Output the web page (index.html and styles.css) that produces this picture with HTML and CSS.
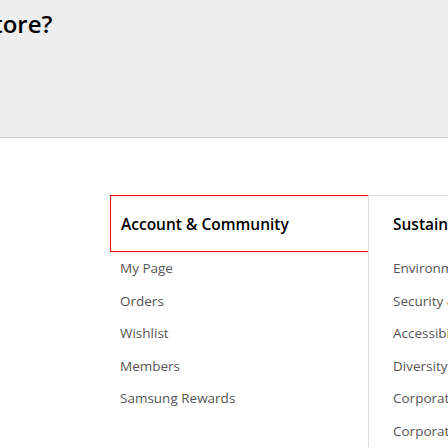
FILE: index.html
```html
<!DOCTYPE html>
<html>
<head>
<meta charset="utf-8">
<link rel="stylesheet" href="styles.css">
</head>
<body>
<div class="top">
  <h2 class="more">Store?</h2>
</div>
<div class="nav">
  <div class="spacer"></div>
  <div class="col col-active">
    <div class="head">Account &amp; Community</div>
    <ul class="links">
      <li>My Page</li>
      <li>Orders</li>
      <li>Wishlist</li>
      <li>Members</li>
      <li>Samsung Rewards</li>
    </ul>
  </div>
  <div class="col">
    <div class="head">Sustainability</div>
    <ul class="links">
      <li>Environment</li>
      <li>Security &amp; Privacy</li>
      <li>Accessibility</li>
      <li>Diversity &middot; Equity &middot; Inclusion</li>
      <li>Corporate Citizenship</li>
      <li>Corporate Sustainability</li>
    </ul>
  </div>
</div>
</body>
</html>
```
FILE: styles.css
```css
html, body {
  margin: 0;
  padding: 0;
  background: #fff;
  overflow: hidden;
  width: 448px;
  height: 448px;
}
.top {
  background: #eeeeee;
  height: 137px;
  border-bottom: 1px solid #cccccc;
  box-sizing: content-box;
  overflow: hidden;
}
.more {
  margin: 0;
  padding-top: 8px;
  font-family: "Open Sans", sans-serif;
  font-weight: 600;
  font-size: 24px;
  line-height: 32px;
  color: #000;
  margin-left: -20px;
}
.nav {
  display: flex;
  margin-top: 57px;
  white-space: nowrap;
}
.spacer {
  width: 110px;
  flex: none;
}
.col {
  flex: none;
  width: 258px;
  border-left: 1px solid #dddddd;
  border-top: 1px solid #dddddd;
  box-sizing: border-box;
}
.col-active {
  border-left: none;
  border-top: none;
}
.head {
  height: 56px;
  display: flex;
  align-items: center;
  padding-left: 24px;
  font-family: "Open Sans", sans-serif;
  font-weight: 600;
  font-size: 15.5px;
  color: #000;
  box-sizing: border-box;
}
.col-active .head {
  height: 57px;
  border: 1px solid #ff0000;
  margin-right: -1px;
  padding-left: 10px;
}
.links {
  list-style: none;
  margin: 0;
  padding: 0 0 0 24px;
  font-family: "Open Sans", sans-serif;
  font-size: 13.5px;
  color: #555;
}
.col-active .links {
  padding-left: 10px;
}
.links li {
  height: 32.5px;
  line-height: 32.5px;
}
```
